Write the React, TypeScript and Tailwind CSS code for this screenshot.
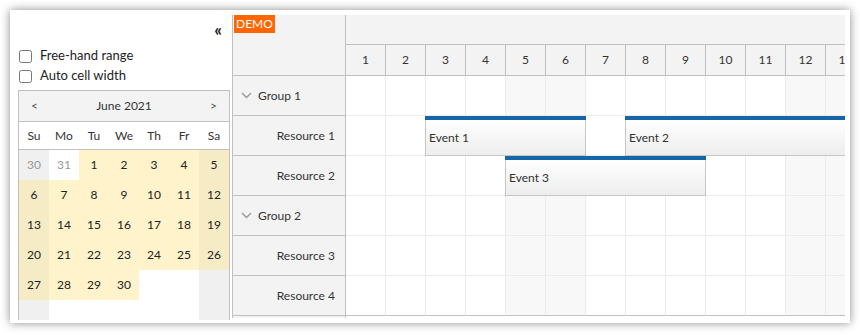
import React from 'react';

type Row = { kind: 'group' | 'resource'; name: string };
type Ev = { row: number; start: number; end: number; text: string };

const rows: Row[] = [
  { kind: 'group', name: 'Group 1' },
  { kind: 'resource', name: 'Resource 1' },
  { kind: 'resource', name: 'Resource 2' },
  { kind: 'group', name: 'Group 2' },
  { kind: 'resource', name: 'Resource 3' },
  { kind: 'resource', name: 'Resource 4' },
];

const events: Ev[] = [
  { row: 1, start: 3, end: 6, text: 'Event 1' },
  { row: 1, start: 8, end: 14, text: 'Event 2' },
  { row: 2, start: 5, end: 9, text: 'Event 3' },
];

const days = Array.from({ length: 13 }, (_, i) => i + 1);
const weekendDays = new Set([5, 6, 12, 13]);

const font = { fontFamily: 'Lato, "Liberation Sans", sans-serif' };

const ChevronDown = () => (
  <svg width="11" height="7" viewBox="0 0 11 7" className="mr-[6px]">
    <path d="M1 1 L5.5 5.5 L10 1" fill="none" stroke="#9a9a9a" strokeWidth="1.4" />
  </svg>
);

// Navigator cells: 6 weeks, Sunday first
const navWeeks: { day: number | null; inMonth: boolean }[][] = (() => {
  const cells: { day: number | null; inMonth: boolean }[] = [
    { day: 30, inMonth: false },
    { day: 31, inMonth: false },
  ];
  for (let d = 1; d <= 30; d++) cells.push({ day: d, inMonth: true });
  while (cells.length < 42) cells.push({ day: null, inMonth: false });
  const weeks = [];
  for (let i = 0; i < 6; i++) weeks.push(cells.slice(i * 7, i * 7 + 7));
  return weeks;
})();

const cellBg = (col: number, inMonth: boolean) => {
  const weekend = col === 0 || col === 6;
  if (inMonth) return weekend ? 'bg-[#f5ebc5]' : 'bg-[#fff3cc]';
  return weekend ? 'bg-[#f0f0f0]' : 'bg-white';
};

const Navigator = () => (
  <div className="ml-[8px] w-[212px] border border-[#c0c0c0] bg-white text-[12px] text-[#333]">
    <div className="flex h-[31px] items-center justify-between border-b border-[#c0c0c0] bg-[#f3f3f3] px-[12px]">
      <span className="text-[#555]">&lt;</span>
      <span>June 2021</span>
      <span className="text-[#555]">&gt;</span>
    </div>
    <div className="grid h-[28px] grid-cols-7 items-center border-b border-[#c0c0c0] text-center">
      {['Su', 'Mo', 'Tu', 'We', 'Th', 'Fr', 'Sa'].map((d) => (
        <div key={d}>{d}</div>
      ))}
    </div>
    {navWeeks.map((week, wi) => (
      <div key={wi} className="grid grid-cols-7">
        {week.map((c, ci) => (
          <div
            key={ci}
            className={`flex h-[30px] items-center justify-center ${cellBg(ci, c.inMonth)} ${
              c.inMonth ? 'text-[#222]' : 'text-[#999]'
            }`}
          >
            {c.day ?? ''}
          </div>
        ))}
      </div>
    ))}
  </div>
);

const LeftPanel = () => (
  <div className="h-[310px] w-[222px] shrink-0 overflow-hidden">
    <div className="flex h-[36px] justify-end pr-[10px] pt-[12px] text-[17px] font-bold leading-[16px] text-[#222]">
      «
    </div>
    <label className="flex h-[20px] items-center pl-[9px] text-[13px] text-[#222]">
      <input type="checkbox" className="m-0 mr-[8px] h-[13px] w-[13px]" />
      Free-hand range
    </label>
    <label className="flex h-[20px] items-center pl-[9px] text-[13px] text-[#222]">
      <input type="checkbox" className="m-0 mr-[8px] h-[13px] w-[13px]" />
      Auto cell width
    </label>
    <div className="mt-[4px]">
      <Navigator />
    </div>
  </div>
);

const EventBox = ({ ev }: { ev: Ev }) => {
  const left = (ev.start - 1) * 40 - 1;
  const width = (ev.end - ev.start + 1) * 40 + 1;
  return (
    <div
      className="absolute top-0 flex h-[40px] flex-col"
      style={{ left, width }}
    >
      <div className="h-[4px] bg-[#1565a7]" />
      <div className="flex flex-1 items-center border-x border-b border-[#c6c6c6] bg-linear-to-b from-white to-[#ededed] pl-[3px] text-[12px] text-[#333]">
        {ev.text}
      </div>
    </div>
  );
};

const Scheduler = () => (
  <div className="mt-[5px] flex h-[303px] w-[613px] border-l border-[#c0c0c0] text-[12px] text-[#333]">
    {/* row headers */}
    <div className="w-[113px] shrink-0 border-r border-[#c0c0c0] bg-[#f3f3f3]">
      <div className="h-[61px] border-b border-[#c0c0c0] pl-[1px]">
        <span className="inline-block bg-[#ff6600] px-[2px] text-[12px] leading-[18px] text-white">
          DEMO
        </span>
      </div>
      {rows.map((r) => (
        <div
          key={r.name}
          className={`flex h-[40px] items-center border-b border-[#c0c0c0] ${
            r.kind === 'group' ? 'pl-[8px]' : 'justify-end pr-[10px]'
          }`}
        >
          {r.kind === 'group' && <ChevronDown />}
          {r.name}
        </div>
      ))}
    </div>

    {/* time header + grid */}
    <div className="flex-1 overflow-hidden">
      <div className="w-[520px]">
        <div className="h-[30px] border-b border-[#c0c0c0] bg-[#f3f3f3]" />
        <div className="flex h-[31px] border-b border-[#c0c0c0] bg-[#f3f3f3]">
          {days.map((d) => (
            <div
              key={d}
              className="flex w-[40px] shrink-0 items-center justify-center border-r border-[#c0c0c0]"
            >
              {d}
            </div>
          ))}
        </div>
        {rows.map((r, ri) => (
          <div key={r.name} className="relative flex h-[40px]">
            {days.map((d) => (
              <div
                key={d}
                className={`w-[40px] shrink-0 border-r border-b border-[#ebebeb] ${
                  weekendDays.has(d) ? 'bg-[#f8f8f8]' : 'bg-white'
                } ${ri === rows.length - 1 ? 'border-b-[#c0c0c0]' : ''}`}
              />
            ))}
            {events
              .filter((e) => e.row === ri)
              .map((e) => (
                <EventBox key={e.text} ev={e} />
              ))}
          </div>
        ))}
      </div>
    </div>
  </div>
);

export default function App() {
  return (
    <div className="h-[335px] w-[860px] bg-white pl-[10px] pt-[10px]" style={font}>
      <div className="flex h-[313px] w-[840px] bg-white shadow-[0_0_9px_rgba(0,0,0,0.45)]">
        <LeftPanel />
        <Scheduler />
      </div>
    </div>
  );
}
